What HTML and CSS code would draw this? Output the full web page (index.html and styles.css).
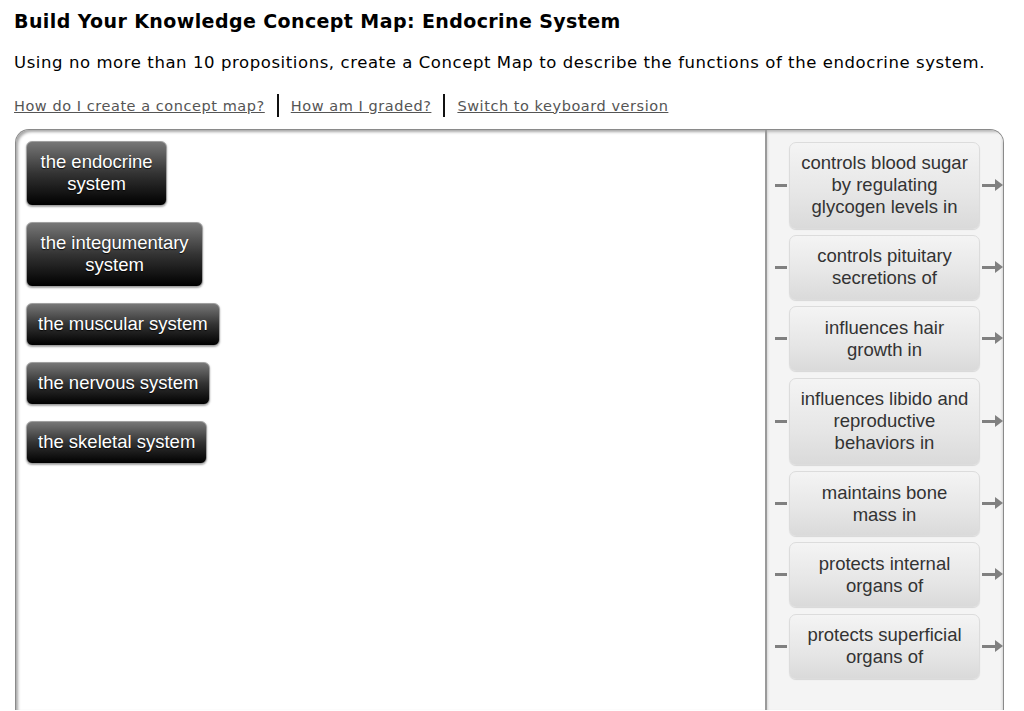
FILE: index.html
```html
<!DOCTYPE html>
<html>
<head>
<meta charset="utf-8">
<link rel="stylesheet" href="styles.css">
</head>
<body>
<div class="page">
  <h1 class="title">Build Your Knowledge Concept Map: Endocrine System</h1>
  <p class="intro">Using no more than 10 propositions, create a Concept Map to describe the functions of the endocrine system.</p>
  <div class="links">
    <a href="#">How do I create a concept map?</a>
    <span class="sep"></span>
    <a href="#">How am I graded?</a>
    <span class="sep"></span>
    <a href="#">Switch to keyboard version</a>
  </div>
  <div class="map">
    <div class="canvas">
      <div class="concept concept-multi">the endocrine<br>system</div>
      <div class="concept concept-multi">the integumentary<br>system</div>
      <div class="concept">the muscular system</div>
      <div class="concept">the nervous system</div>
      <div class="concept">the skeletal system</div>
    </div>
    <div class="panel">
      <div class="link-row"><span class="dash"></span><div class="phrase">controls blood sugar<br>by regulating<br>glycogen levels in</div><span class="arrow"></span></div>
      <div class="link-row"><span class="dash"></span><div class="phrase">controls pituitary<br>secretions of</div><span class="arrow"></span></div>
      <div class="link-row"><span class="dash"></span><div class="phrase">influences hair<br>growth in</div><span class="arrow"></span></div>
      <div class="link-row"><span class="dash"></span><div class="phrase">influences libido and<br>reproductive<br>behaviors in</div><span class="arrow"></span></div>
      <div class="link-row"><span class="dash"></span><div class="phrase">maintains bone<br>mass in</div><span class="arrow"></span></div>
      <div class="link-row"><span class="dash"></span><div class="phrase">protects internal<br>organs of</div><span class="arrow"></span></div>
      <div class="link-row"><span class="dash"></span><div class="phrase">protects superficial<br>organs of</div><span class="arrow"></span></div>
    </div>
  </div>
</div>
</body>
</html>
```

FILE: styles.css
```css
html, body {
  margin: 0;
  padding: 0;
  background: #fff;
  overflow: hidden;
}
.page {
  padding: 10px 0 0 14px;
  font-family: "DejaVu Sans", Verdana, sans-serif;
  color: #000;
}
.title {
  margin: 0;
  font-size: 19px;
  letter-spacing: 0.4px;
  font-weight: bold;
  line-height: 22px;
}
.intro {
  margin: 20px 0 0 0;
  font-size: 16.5px;
  letter-spacing: 0.58px;
  line-height: 22px;
}
.links {
  margin-top: 20px;
  display: flex;
  align-items: center;
  font-size: 14.5px;
  letter-spacing: 0.55px;
  line-height: 20px;
}
.links a {
  color: #555;
  text-decoration: underline;
}
.sep {
  display: inline-block;
  width: 2px;
  height: 23px;
  background: #111;
  margin: 0 12px;
}
.map {
  margin-top: 12px;
  margin-left: 1px;
  width: 989px;
  height: 581px;
  box-sizing: border-box;
  border: 1px solid #8a8a8a;
  border-bottom: none;
  border-radius: 14px 14px 0 0;
  box-shadow: inset 2px 2px 3px rgba(0,0,0,0.35);
  display: flex;
  overflow: hidden;
}
.canvas {
  flex: 1;
  padding: 11px 0 0 10px;
  display: flex;
  flex-direction: column;
  align-items: flex-start;
  gap: 16px;
}
.concept {
  font-family: "Liberation Sans", Arial, sans-serif;
  font-size: 18.5px;
  line-height: 22px;
  color: #fff;
  text-align: center;
  padding: 9px 11px 10px 11px;
  border-radius: 6px;
  background: linear-gradient(to bottom, #777 0%, #333 50%, #000 100%);
  border: 1px solid #a0a0a0;
  box-shadow: 0 1px 2px rgba(0,0,0,0.35);
  text-shadow: 0 1px 1px rgba(0,0,0,0.8);
}
.concept-multi {
  padding-left: 13.5px;
  padding-right: 13.5px;
}
.panel {
  width: 236px;
  flex: none;
  background: #f4f4f4;
  border-left: 2px solid #9a9a9a;
  padding-top: 11.5px;
  display: flex;
  flex-direction: column;
  gap: 6.4px;
  box-shadow: inset 0 2px 3px rgba(0,0,0,0.25);
}
.link-row {
  display: flex;
  align-items: center;
}
.dash {
  width: 12px;
  height: 3px;
  background: #808080;
  margin-left: 8px;
  margin-right: 2px;
}
.phrase {
  width: 191px;
  box-sizing: border-box;
  font-family: "Liberation Sans", Arial, sans-serif;
  font-size: 18.5px;
  line-height: 22px;
  color: #333;
  text-align: center;
  padding: 9.5px 2px 9.5px 2px;
  border-radius: 7px;
  border: 1px solid #dcdcdc;
  background: linear-gradient(to bottom, #f4f4f4 0%, #e6e6e6 60%, #dadada 100%);
  box-shadow: 0 1px 1px rgba(0,0,0,0.12);
}
.arrow {
  position: relative;
  width: 13px;
  height: 3px;
  background: #808080;
  margin-left: 2px;
}
.arrow::after {
  content: "";
  position: absolute;
  right: -8px;
  top: -5px;
  border-left: 8px solid #808080;
  border-top: 6.5px solid transparent;
  border-bottom: 6.5px solid transparent;
}
```
